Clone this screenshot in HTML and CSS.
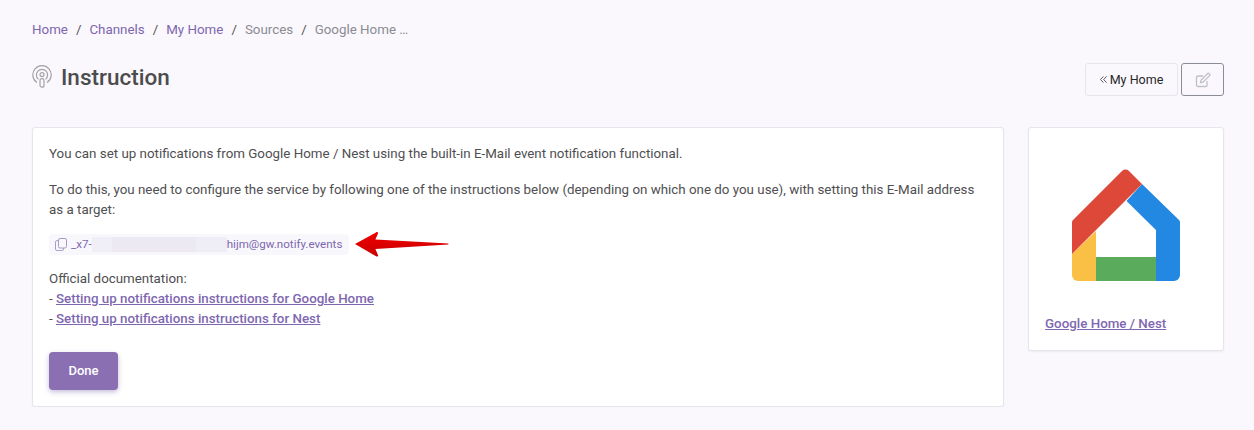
FILE: index.html
```html
<!DOCTYPE html>
<html lang="en">
<head>
  <meta charset="UTF-8" />
  <meta name="viewport" content="width=device-width, initial-scale=1.0" />
  <title>Instruction</title>
  <link rel="stylesheet" href="styles.css">
</head>
<body>
  <nav class="breadcrumb">
    <a href="#">Home</a><span class="sep">/</span>
    <a href="#">Channels</a><span class="sep">/</span>
    <a href="#">My Home</a><span class="sep">/</span>
    <span class="crumb">Sources</span><span class="sep">/</span>
    <span class="crumb">Google Home …</span>
  </nav>

  <div class="page-head">
    <h1 class="page-title">
      <svg class="title-icon" width="20" height="24" viewBox="0 0 20 24" fill="none" stroke="#a3a3a8" stroke-width="1.2">
        <path d="M5 17.6A9.2 9.2 0 1 1 15 17.6" />
        <path d="M6.4 14.2A5.6 5.6 0 1 1 13.6 14.2" />
        <circle cx="10" cy="9.6" r="2" />
        <rect x="8" y="13.6" width="4" height="8.6" rx="2" />
      </svg>
      Instruction
    </h1>
    <div class="head-actions">
      <a href="#" class="btn-back">
        <svg width="7" height="7" viewBox="0 0 7 7" fill="none" stroke="#4a4a50" stroke-width="0.9">
          <path d="M3.400 .4.500 3.500l2.900 3.100M6.600 .4 3.700 3.500l2.900 3.100" />
        </svg>
        My Home
      </a>
      <a href="#" class="btn-edit">
        <svg width="16" height="16" viewBox="0 0 16 16" fill="none" stroke="#bfc0c8" stroke-width="1.3">
          <path d="M12 9v4.200a1.300 1.300 0 0 1-1.300 1.300H2.800a1.300 1.300 0 0 1-1.300-1.300V5.300A1.300 1.300 0 0 1 2.800 4H8" />
          <path d="M6 8.200 12.600 1.600a1 1 0 0 1 1.400 0l.6.6a1 1 0 0 1 0 1.400L8 10.200l-2.400.4z" />
        </svg>
      </a>
    </div>
  </div>

  <div class="content">
    <section class="card main-card">
      <p class="para">You can set up notifications from Google Home / Nest using the built-in E-Mail event notification functional.</p>
      <p class="para">To do this, you need to configure the service by following one of the instructions below (depending on which one do you use), with setting this E-Mail address as a target:</p>

      <div class="email-row">
        <div class="email-chip">
          <svg class="copy-icon" width="12" height="13" viewBox="0 0 12 13" fill="none" stroke="#a99bc8" stroke-width="1">
            <rect x="3.500" y="0.500" width="8" height="9.500" rx="1.500" />
            <path d="M3.500 2.600H2A1.500 1.500 0 0 0 .5 4.100v7A1.500 1.500 0 0 0 2 12.600h5A1.500 1.500 0 0 0 8.500 11.100V10" />
          </svg>
          <span>_x7-</span><span class="blurred"></span><span>hijm@gw.notify.events</span>
        </div>
        <svg class="arrow" width="94" height="26" viewBox="0 0 94 26">
          <defs>
            <linearGradient id="arrow-red" x1="0" y1="0" x2="0" y2="1">
              <stop offset="0" stop-color="#f00000" />
              <stop offset="1" stop-color="#c80000" />
            </linearGradient>
          </defs>
          <path d="M0 13 21 1.400c1.200-.7 2.400 0 1.900 1.300L20.400 8.600 93.400 12.600v.8L20.400 18l2.600 6c.5 1.200-.7 2-1.900 1.300z" fill="url(#arrow-red)" />
        </svg>
      </div>

      <p class="docs">
        Official documentation:<br>
        - <a href="#" class="doc-link">Setting up notifications instructions for Google Home</a><br>
        - <a href="#" class="doc-link">Setting up notifications instructions for Nest</a>
      </p>

      <button class="btn-done" type="button">Done</button>
    </section>

    <aside class="card side-card">
      <svg class="logo" width="108" height="112" viewBox="0 0 108 112">
        <path d="M0 85 24 62V112H6a6 6 0 0 1-6-6z" fill="#fabf45" />
        <path d="M24 88H84V112H24z" fill="#5bab5c" />
        <path d="M70 15 107 51a3 3 0 0 1 1 2V106a6 6 0 0 1-6 6H84V61L54.500 32z" fill="#2288e2" />
        <path d="M0 85V54a4 4 0 0 1 1-3L50 2a5 5 0 0 1 7 0L70 15z" fill="#dd4838" />
      </svg>
      <a href="#" class="side-link">Google Home / Nest</a>
    </aside>
  </div>
</body>
</html>
```

FILE: styles.css
```css
body {
  margin: 0;
  padding: 0 30px 0 32px;
  background-color: #faf8fc;
  font-family: Roboto, "Liberation Sans", sans-serif;
  font-size: 13.35px;
  color: #4f4f52;
}
a {
  color: #7e67b0;
}
.breadcrumb {
  display: flex;
  align-items: center;
  height: 20px;
  padding-top: 20px;
  line-height: 20px;
}
.breadcrumb a {
  text-decoration: none;
}
.sep {
  margin: 0 8px;
  color: #555;
}
.crumb {
  color: #8a8b94;
}
.page-head {
  display: flex;
  justify-content: space-between;
  align-items: flex-start;
  margin-top: 23px;
  height: 33px;
}
.page-title {
  display: flex;
  align-items: center;
  gap: 9px;
  height: 28px;
  margin: 0;
  font-size: 22.5px;
  font-weight: 500;
  color: #4c4c4e;
}
.head-actions {
  display: flex;
  gap: 3px;
}
.btn-back,
.btn-edit {
  display: flex;
  align-items: center;
  justify-content: center;
  box-sizing: border-box;
  height: 33px;
  border-radius: 3px;
  text-decoration: none;
}
.btn-back {
  gap: 3px;
  width: 93px;
  border: 1px solid #e7e6ec;
  color: #26262a;
  font-size: 12.5px;
}
.btn-edit {
  width: 43px;
  border: 1px solid #8b8d96;
}
.content {
  display: flex;
  align-items: flex-start;
  gap: 24px;
  margin-top: 31px;
}
.card {
  box-sizing: border-box;
  background-color: #fff;
  border: 1px solid #e6e4ed;
  border-radius: 3px;
  box-shadow: 0 1px 2px rgba(60, 50, 90, 0.06);
}
.main-card {
  width: 972px;
  height: 280px;
  padding: 16px;
}
.side-card {
  width: 196px;
  height: 224px;
  padding: 41px 16px 0;
}
.para {
  margin: 0 0 16px;
  line-height: 20px;
}
.email-row {
  display: flex;
  align-items: center;
  gap: 6px;
  margin-top: -5px;
}
.email-chip {
  display: flex;
  align-items: center;
  box-sizing: border-box;
  width: 300px;
  height: 21px;
  padding-left: 6px;
  background-color: #f8f7fb;
  border-radius: 4px;
  color: #7e67b0;
  font-size: 11.6px;
}
.copy-icon {
  margin-right: 4px;
}
.blurred {
  width: 135px;
  height: 15px;
  background: linear-gradient(to right, #f0eef6 15%, #ece9f3 15%, #ece9f3 77%, #efedf5 77%);
}
.docs {
  margin: 12px 0 0;
  line-height: 20px;
}
.doc-link,
.side-link {
  font-weight: 500;
}
.btn-done {
  display: block;
  width: 69px;
  height: 38px;
  margin-top: 23px;
  padding: 0 0 2px;
  background-color: #8a6fb3;
  border: none;
  border-radius: 4px;
  box-shadow: 0 2px 5px rgba(90, 70, 150, 0.35);
  color: #fff;
  font-family: inherit;
  font-size: 13px;
  font-weight: 500;
}
.logo {
  display: block;
  margin-left: 27px;
}
.side-link {
  display: block;
  margin-top: 33px;
  line-height: 20px;
}
```
